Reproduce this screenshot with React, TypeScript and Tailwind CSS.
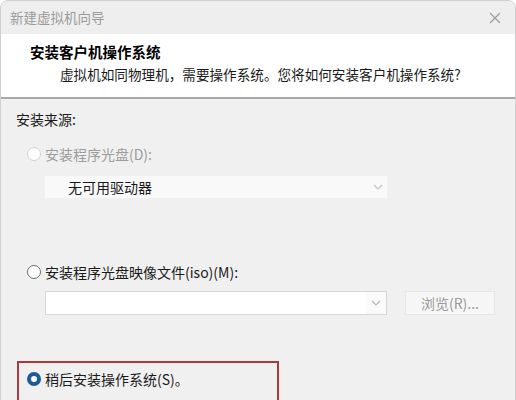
const font = { fontFamily: '"Noto Sans CJK SC", "Microsoft YaHei", sans-serif' };

const Chevron = ({ color = "#b0b0b0" }: { color?: string }) => (
  <svg width="10" height="6" viewBox="0 0 10 6" fill="none">
    <polyline points="1,1 5,5 9,1" stroke={color} strokeWidth="1.2" />
  </svg>
);

const Radio = ({ state }: { state: "disabled" | "off" | "on" }) => {
  if (state === "on") {
    return (
      <span className="flex h-[14px] w-[14px] items-center justify-center rounded-full bg-[#1d5a97]">
        <span className="h-[6px] w-[6px] rounded-full bg-white" />
      </span>
    );
  }
  return (
    <span
      className={`h-[14px] w-[14px] rounded-full border bg-white ${
        state === "disabled" ? "border-[#d4d4d4] bg-[#f8f8f8]" : "border-[#6a6a6a]"
      }`}
    />
  );
};

export default function App() {
  return (
    <div
      className="h-[400px] w-[516px] overflow-hidden bg-white text-[14px] text-[#1a1a1a]"
      style={font}
    >
      <div className="flex h-[402px] flex-col overflow-hidden rounded-t-[8px] border border-[#cfcfcf] bg-[#f0f0f0]">
        {/* Title bar */}
        <div className="flex h-[33px] shrink-0 items-center justify-between bg-[#eeeeee] pl-[9px] pr-[14px]">
          <span className="text-[13.5px] text-[#9b9b9b]">新建虚拟机向导</span>
          <svg width="12" height="12" viewBox="0 0 12 12" fill="none">
            <path d="M1 1L11 11M11 1L1 11" stroke="#9a9a9a" strokeWidth="1.1" />
          </svg>
        </div>

        {/* Header */}
        <div className="flex h-[65px] shrink-0 flex-col border-b-2 border-[#a8a8a8] bg-white pt-[7px]">
          <div className="pl-[29px] text-[14.5px] font-bold leading-[22px] text-black">安装客户机操作系统</div>
          <div className="pl-[59px] text-[13.6px] leading-[22px] text-[#1a1a1a]">
            虚拟机如同物理机，需要操作系统。您将如何安装客户机操作系统?
          </div>
        </div>

        {/* Body */}
        <div className="flex flex-col px-[15px] pt-[10px]">
          <div className="leading-[20px]">安装来源:</div>

          <div className="ml-[11px] mt-[15px] flex h-[20px] items-center gap-[4px] text-[#9c9c9c]">
            <Radio state="disabled" />
            <span>安装程序光盘(D):</span>
          </div>

          <div className="ml-[29px] mt-[12px] flex h-[22px] w-[342px] items-center justify-between bg-[#f9f9f9] pl-[23px] pr-[4px]">
            <span className="text-[#1a1a1a]">无可用驱动器</span>
            <Chevron color="#c4c4c4" />
          </div>

          <div className="ml-[11px] mt-[64px] flex h-[20px] items-center gap-[4px]">
            <Radio state="off" />
            <span>安装程序光盘映像文件(iso)(M):</span>
          </div>

          <div className="mt-[9px] flex items-center gap-[18px]">
            <div className="ml-[29px] flex h-[24px] w-[342px] items-center justify-end border border-[#d6d6d6] bg-white">
              <div className="flex h-full w-[20px] items-center justify-center bg-[#fafafa]">
                <Chevron color="#b8b8b8" />
              </div>
            </div>
            <div className="flex h-[24px] w-[90px] items-center justify-center border border-[#e6e6e6] bg-[#f6f6f6] text-[#9a9a9a]">
              浏览(R)...
            </div>
          </div>

          <div className="ml-[1px] mt-[46px] h-[60px] w-[262px] border-2 border-[#b0393c] pl-[8px] pt-[6px]">
            <div className="flex h-[20px] items-center gap-[4px]">
              <Radio state="on" />
              <span>稍后安装操作系统(S)。</span>
            </div>
          </div>
        </div>
      </div>
    </div>
  );
}
